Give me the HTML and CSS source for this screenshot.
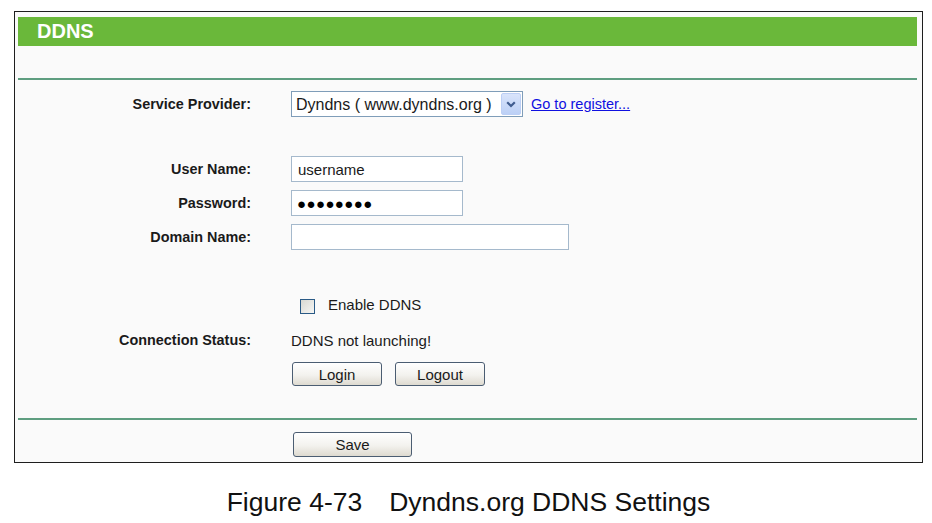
FILE: index.html
```html
<!DOCTYPE html>
<html lang="en">
<head>
<meta charset="utf-8">
<title>DDNS</title>
<link rel="stylesheet" href="styles.css">
</head>
<body>
<div class="frame">
  <div class="titlebar">DDNS</div>
  <div class="rule rule-top"></div>

  <div class="row row-provider">
    <div class="label">Service Provider:</div>
    <div class="ctrl">
      <div class="select-wrap">
        <select class="select">
          <option>Dyndns ( www.dyndns.org )</option>
        </select>
        <span class="select-arrow">
          <svg width="10" height="7" viewBox="0 0 10 7"><path d="M1.2 1.3 L5 5 L8.8 1.3" fill="none" stroke="#3f5c8f" stroke-width="2.2"/></svg>
        </span>
      </div>
      <a class="link" href="#">Go to register...</a>
    </div>
  </div>

  <div class="row row-user">
    <div class="label">User Name:</div>
    <div class="ctrl"><input class="input input-short" type="text" value="username"></div>
  </div>
  <div class="row row-pass">
    <div class="label">Password:</div>
    <div class="ctrl"><input class="input input-short input-dots" type="text" value="●●●●●●●●"></div>
  </div>
  <div class="row row-domain">
    <div class="label">Domain Name:</div>
    <div class="ctrl"><input class="input input-long" type="text" value=""></div>
  </div>

  <div class="row row-enable">
    <div class="label"></div>
    <div class="ctrl ctrl-enable">
      <label class="check-label"><input class="check" type="checkbox"><span class="check-text">Enable DDNS</span></label>
    </div>
  </div>

  <div class="row row-status">
    <div class="label">Connection Status:</div>
    <div class="ctrl text">DDNS not launching!</div>
  </div>

  <div class="row row-buttons">
    <div class="label"></div>
    <div class="ctrl ctrl-buttons">
      <button class="btn btn-login" type="button">Login</button>
      <button class="btn btn-logout" type="button">Logout</button>
    </div>
  </div>

  <div class="rule rule-bottom"></div>

  <div class="row row-save">
    <div class="label"></div>
    <div class="ctrl ctrl-save">
      <button class="btn btn-save" type="button">Save</button>
    </div>
  </div>
</div>

<div class="caption"><span class="fig-num">Figure 4-73</span><span class="fig-title">Dyndns.org DDNS Settings</span></div>
</body>
</html>
```
FILE: styles.css
```css
html, body {
  margin: 0;
  padding: 0;
  background: #ffffff;
}

body {
  font-family: "Liberation Sans", Arial, sans-serif;
  color: #1a1a1a;
}

.frame {
  margin: 11px 0 0 14px;
  width: 899px;
  border: 1px solid #1e1e1e;
  background: #fafafa;
  padding: 5px 5px 5px 3px;
}

.titlebar {
  height: 29px;
  line-height: 29px;
  background: #6ab83a;
  color: #ffffff;
  font-weight: bold;
  font-size: 20px;
  padding-left: 19px;
}

.rule {
  height: 2px;
  background: #5e9e80;
}

.rule-top {
  margin-top: 32px;
}

.rule-bottom {
  margin-top: 32px;
}

.row {
  display: flex;
  align-items: center;
}

.label {
  width: 233px;
  flex: none;
  text-align: right;
  font-weight: bold;
  font-size: 14.4px;
  color: #1a1a1a;
}

.ctrl {
  margin-left: 40px;
  display: flex;
  align-items: center;
}

.text {
  font-size: 15px;
  color: #1a1a1a;
}

.row-provider { margin-top: 11px; height: 26px; }
.row-user { margin-top: 39px; height: 26px; }
.row-pass { margin-top: 8px; height: 26px; }
.row-domain { margin-top: 8px; height: 26px; }
.row-enable { margin-top: 47px; height: 18px; align-items: flex-start; }
.row-status { margin-top: 15px; height: 20px; }
.row-buttons { margin-top: 12px; height: 24px; }
.row-save { margin-top: 12px; height: 25px; }

/* select */
.select-wrap {
  position: relative;
  width: 232px;
  height: 26px;
}

.select {
  appearance: none;
  -webkit-appearance: none;
  width: 232px;
  height: 26px;
  margin: 0;
  border: 1px solid #7f9db9;
  border-radius: 0;
  background: #ffffff;
  font-family: "Liberation Sans", Arial, sans-serif;
  font-size: 16px;
  color: #1a1a1a;
  padding: 0 0 0 4px;
}

.select-arrow {
  position: absolute;
  top: 2px;
  right: 2px;
  width: 18px;
  height: 20px;
  border: 1px solid #bccff5;
  border-radius: 2px;
  background: linear-gradient(#d9e4fb, #bcd0f6);
  display: flex;
  align-items: center;
  justify-content: center;
}

.link {
  margin-left: 8px;
  font-size: 14.5px;
  color: #1010e0;
  text-decoration: underline;
}

/* inputs */
.input {
  box-sizing: border-box;
  height: 26px;
  margin: 0;
  border: 1px solid #a5b9cc;
  background: #ffffff;
  font-family: "Liberation Sans", Arial, sans-serif;
  font-size: 15px;
  color: #1a1a1a;
  padding: 0 6px;
  outline: none;
}

.input-short { width: 172px; }
.input-long { width: 278px; }

.input-dots {
  font-size: 15px;
  letter-spacing: 0.4px;
  padding-left: 5px;
  color: #000000;
}

/* checkbox */
.ctrl-enable {
  padding-left: 9px;
}

.check-label {
  display: flex;
  align-items: flex-start;
  font-size: 15px;
  color: #1a1a1a;
}

.check {
  appearance: none;
  -webkit-appearance: none;
  width: 15px;
  height: 15px;
  margin: 2px 13px 0 0;
  border: 1px solid #2a5a86;
  background: linear-gradient(135deg, #d8d8d2, #f6f6f4);
}

.check-text {
  line-height: 15px;
}

/* buttons */
.btn {
  box-sizing: border-box;
  height: 24px;
  margin: 0;
  padding: 0;
  border: 1px solid #4b5d72;
  border-radius: 3px;
  background: linear-gradient(#ffffff 0%, #f3f2ee 55%, #dedad0 100%);
  font-family: "Liberation Sans", Arial, sans-serif;
  font-size: 15px;
  color: #1a1a1a;
}

.ctrl-buttons { padding-left: 1px; }
.btn-login { width: 90px; }
.btn-logout { width: 90px; margin-left: 13px; }

.ctrl-save { padding-left: 2px; }
.btn-save { width: 119px; height: 25px; }

/* caption */
.caption {
  margin: 24px 0 0 14px;
  width: 909px;
  text-align: center;
  font-family: "Liberation Sans", Arial, sans-serif;
  font-size: 26.5px;
  line-height: 31px;
  color: #111111;
}

.fig-title {
  margin-left: 27px;
}
```
